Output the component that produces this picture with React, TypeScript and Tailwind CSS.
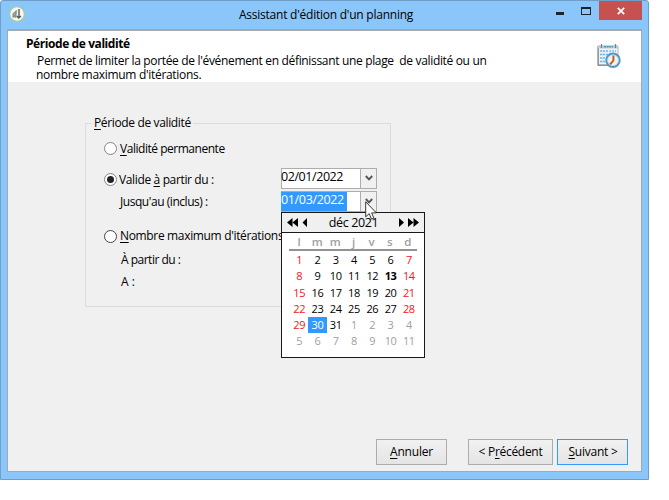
import React from "react";

const days = ["l", "m", "m", "j", "v", "s", "d"];
const weeks = [
  [1, 2, 3, 4, 5, 6, 7],
  [8, 9, 10, 11, 12, 13, 14],
  [15, 16, 17, 18, 19, 20, 21],
  [22, 23, 24, 25, 26, 27, 28],
  [29, 30, 31, 1, 2, 3, 4],
  [5, 6, 7, 8, 9, 10, 11],
];

function dayClass(week: number, col: number, day: number) {
  if (week === 5 || (week === 4 && col > 2)) return "text-[#a0a0a0]";
  if (day === 30) return "bg-[#3399ff] text-white";
  if (day === 13) return "font-bold";
  if (col === 0 || col === 6) return "text-[#f5141e]";
  return "";
}

function AppLogo() {
  return (
    <svg className="h-4 w-4" viewBox="0 0 16 16">
      <circle cx="8" cy="8" r="7.3" fill="#f7f8f5" stroke="#a9cf83" strokeWidth="1.1" />
      <path d="M4.2 11.5V8.2l2.6-2.5v6M5.5 8.5v3" fill="none" stroke="#8d918d" strokeWidth="1.6" />
      <path d="M10 3v8M8 10l1.7 2 2.3-2" fill="none" stroke="#565d5b" strokeWidth="1.4" />
      <path d="M7.6 4v4" stroke="#a3a6a3" />
    </svg>
  );
}

function ScheduleIcon() {
  return (
    <svg className="h-6 w-6" viewBox="0 0 24 24">
      <path d="M1 2h20v19H1z" fill="#eef5fa" stroke="#b4b8bc" />
      <path d="M1.2 2v19.3H13" fill="none" stroke="#8f9194" strokeWidth="1.4" />
      <path d="M1 1.5h20v3H1z" fill="#c6cbd0" />
      <path d="M4.5 0v4M18.5 0v4" stroke="#777e84" strokeWidth="1.2" />
      <path d="M7 2.7h9" stroke="#4c9dc5" strokeWidth="1.6" strokeDasharray="2 .6" />
      <path d="M3 7h16M3 10.5h16M3 14h10M3 17.5h9" stroke="#67b4e6" strokeWidth="1.6" strokeDasharray="2 1" />
      <path d="M5.5 6v13M9 6v13M12.5 6v13M16 6v8" stroke="#b9def4" strokeWidth=".6" />
      <circle cx="16" cy="16.3" r="6.7" fill="#f6f3ef" stroke="#4b9ac5" strokeWidth="2" />
      <circle cx="16" cy="16.3" r="5.2" fill="none" stroke="#c6d1d7" strokeWidth=".7" />
      <path d="M16.4 11.5v5l-3.2 3.8" fill="none" stroke="#c3581f" strokeWidth="1.9" />
    </svg>
  );
}

function Radio({ checked = false, dark = false }: { checked?: boolean; dark?: boolean }) {
  return (
    <span
      className={`flex h-[13px] w-[13px] shrink-0 items-center justify-center rounded-full border bg-white ${
        dark ? "border-[#444]" : "border-[#858585]"
      }`}
    >
      {checked && <span className="h-[7px] w-[7px] rounded-full bg-[#222]" />}
    </span>
  );
}

function DateField({ value, selected = false }: { value: string; selected?: boolean }) {
  return (
    <div className="flex h-[21px] w-24 shrink-0 border border-[#adadad] bg-white">
      <div className="flex-1">
        <span
          className={`-ml-px block h-[19px] text-[12.5px] leading-[16px] ${
            selected ? "w-[66px] bg-[#3399ff] tracking-[-0.35px] text-white" : "tracking-[-0.43px]"
          }`}
        >
          {value}
        </span>
      </div>
      <div className="flex w-4 items-center justify-center border-l border-[#adadad] bg-[#f0f0f0]">
        <svg className="h-2 w-2" viewBox="0 0 8 8">
          <path d="M.8 2 4 5.3 7.2 2" fill="none" stroke="#555" strokeWidth="1.9" />
        </svg>
      </div>
    </div>
  );
}

function Calendar() {
  return (
    <div className="absolute top-[211px] left-[280px] h-[146px] w-36 border border-[#181818] bg-white">
      <div className="flex h-5 items-center justify-between border-b border-[#181818] bg-[#f0f0f0] pr-[5px] pl-[5px]">
        <svg className="h-[9px] w-[22px]" viewBox="0 0 22 9">
          <path d="M5.5 0v9L0 4.5zM11 0v9L5.5 4.5zM20 0v9l-4.5-4.5z" />
        </svg>
        <span className="mr-px text-[12.5px] leading-[18px] tracking-[-0.4px]">déc 2021</span>
        <svg className="h-[9px] w-5" viewBox="0 0 20 9">
          <path d="M0 0v9l5-4.5zM9 0v9l5.5-4.5zM14.5 0v9L20 4.5z" />
        </svg>
      </div>
      <div className="mr-[7px] ml-[7px] grid h-[18px] grid-cols-7 border-b-2 border-[#929292] pl-px text-center text-[11.5px] leading-[17px] font-semibold text-[#a0a0a0]">
        {days.map((d, i) => (
          <span key={i}>{d}</span>
        ))}
      </div>
      <div className="mr-[6px] ml-[8px] mt-px grid grid-cols-7 text-center text-[11px] tracking-[-0.4px]">
        {weeks.map((week, w) =>
          week.map((day, c) => (
            <span key={`${w}-${c}`} className={`h-[16.25px] leading-[16px] ${dayClass(w, c, day)}`}>
              {day}
            </span>
          )),
        )}
      </div>
    </div>
  );
}

function Button({ className, children }: { className: string; children: React.ReactNode }) {
  return (
    <button
      className={`h-[26px] border bg-gradient-to-b from-[#f1f1f1] to-[#e5e5e5] text-[12px] leading-[22px] whitespace-nowrap ${className}`}
    >
      {children}
    </button>
  );
}

export default function App() {
  return (
    <div className="h-[500px] w-[669px] overflow-hidden bg-white font-['Open_Sans',sans-serif] text-[12px] text-black">
      <div className="relative flex h-[480px] w-[649px] flex-col rounded-t-[3px] border border-[#6f9fc9] bg-[#8bc6fa] px-[6px] pb-[7px]">
        <header className="flex h-7 shrink-0 items-start">
          <div className="w-[232px] pt-[5px] pl-[2px]">
            <AppLogo />
          </div>
          <h1 className="w-[314px] pt-[5px] leading-[18px] tracking-[-0.24px]">Assistant d'édition d'un planning</h1>
          <div className="flex flex-1 items-start">
            <span className="mt-[11px] ml-[3px] h-[3px] w-2 bg-[#1c252d]" />
            <span className="mt-[6px] ml-[17px] h-2 w-[10px] border border-t-2 border-[#1c252d]" />
          </div>
          <div className="flex h-[19px] w-[43px] items-center justify-center bg-[#c75050]">
            <svg className="h-2 w-2" viewBox="0 0 8 8">
              <path d="m.8.8 6.4 6.4M7.2.8.8 7.2" stroke="white" strokeWidth="1.7" />
            </svg>
          </div>
        </header>
        <main className="flex flex-1 flex-col border border-t-2 border-[#a3a9ad] bg-[#f0f0f0]">
          <section className="flex h-[51px] shrink-0 justify-between bg-white pr-[20px] pl-[18px]">
            <div className="pt-[4px] whitespace-pre">
              <h2 className="leading-[18px] font-bold tracking-[-0.42px]">Période de validité</h2>
              <p className="pt-px pl-[11px] leading-[14px] tracking-[-0.335px]">
                Permet de limiter la portée de l'événement en définissant une plage  de validité ou un
              </p>
              <p className="pl-[10px] leading-[14px] tracking-[-0.31px]">nombre maximum d'itérations.</p>
            </div>
            <div className="pt-[13px]">
              <ScheduleIcon />
            </div>
          </section>
          <fieldset className="mt-[32px] ml-[77px] h-[193px] w-[306px] shrink-0 border border-[#dcdcdc] pl-[18px]">
            <legend className="-ml-[12px] px-[2px] leading-[18px] tracking-[-0.36px]">
              <u className="underline-offset-2">P</u>ériode de validité
            </legend>
            <div className="-mt-[3px] flex h-[38px] items-center gap-[3px]">
              <Radio />
              <span className="pt-[2px] tracking-[-0.47px]">
                <u className="underline-offset-2">V</u>alidité permanente
              </span>
            </div>
            <div className="flex h-[22px] items-center">
              <div className="flex w-[177px] items-center gap-[2px] pt-[3px]">
                <Radio checked />
                <span className="tracking-[-0.36px]">
                  Valide <u className="underline-offset-2">à</u> partir du :
                </span>
              </div>
              <DateField value="02/01/2022" />
            </div>
            <div className="flex h-6 items-center">
              <span className="w-[177px] pt-[2px] pl-4 tracking-[-0.45px]">Jusqu'au (inclus) :</span>
              <DateField value="01/03/2022" selected />
            </div>
            <div className="mt-[10px] flex h-[26px] items-center gap-[3px]">
              <Radio dark />
              <span className="tracking-[-0.34px] whitespace-nowrap">
                <u className="underline-offset-2">N</u>ombre maximum d'itérations
              </span>
            </div>
            <p className="pl-[17px] leading-[22px] tracking-[-0.5px]">À partir du :</p>
            <p className="pl-[17px] leading-[22px]">A :</p>
          </fieldset>
          <footer className="mt-auto flex pr-[13px] pb-[6px]">
            <Button className="ml-auto w-[71px] border-[#acacac] tracking-[-0.2px]">
              <u className="underline-offset-2">A</u>nnuler
            </Button>
            <Button className="ml-[21px] w-[85px] border-[#acacac] tracking-[-0.3px]">
              &lt; P<u className="underline-offset-2">r</u>écédent
            </Button>
            <Button className="ml-1 w-[71px] border-[#3399ff] pl-px tracking-[-0.25px]">
              <u className="underline-offset-2">S</u>uivant &gt;
            </Button>
          </footer>
        </main>
        <Calendar />
        <svg className="absolute top-[200px] left-[364px] h-5 w-3" viewBox="0 0 12 20">
          <path d="M.7.8v15l3.5-3.2 2.3 5.5 2.4-1-2.3-5.2h4.8z" fill="white" stroke="#222" strokeWidth=".9" />
        </svg>
      </div>
    </div>
  );
}
